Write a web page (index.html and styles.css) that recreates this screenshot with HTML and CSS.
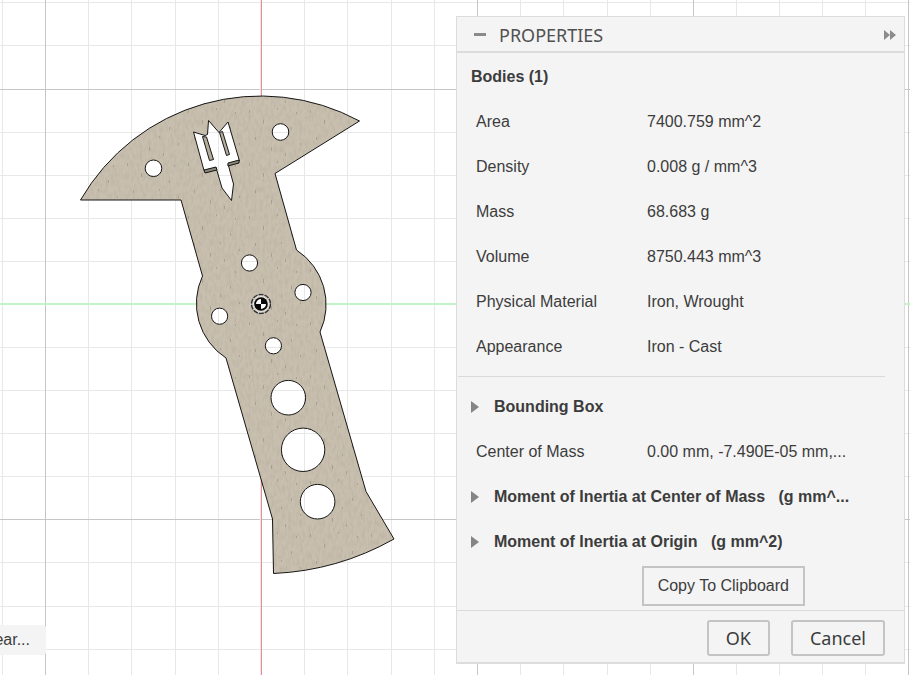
FILE: index.html
```
<!DOCTYPE html>
<html lang="en">
<head>
<meta charset="utf-8">
<title>Properties</title>
<link rel="stylesheet" href="styles.css">
</head>
<body>
<main class="workspace">
  <svg class="canvas" aria-hidden="true">
    <defs>
      <filter id="grain" x="0" y="0" width="1" height="1" color-interpolation-filters="sRGB">
        <feTurbulence type="fractalNoise" baseFrequency="0.35 0.15" numOctaves="2" seed="4"/>
        <feColorMatrix values="0 0 0 0 0.5  0 0 0 0 0.47  0 0 0 0 0.41  0.3 0 0 0 -0.12"/>
        <feComposite in2="SourceGraphic" operator="in" result="noise"/>
        <feMerge><feMergeNode in="SourceGraphic"/><feMergeNode in="noise"/></feMerge>
      </filter>
      <pattern id="specks" width="61" height="53" patternUnits="userSpaceOnUse">
        <path d="M5.500 4v3M19.500 14v4M33.500 2v2M47.500 21v3M11.500 31v3M27.500 41v4M56.500 37v2M41.500 47v3M52.500 6v2M37.500 30v2" stroke="#857d6e" opacity=".45"/>
      </pattern>
      <path id="outline" d="M80.500 200A208 208 0 0 1 359.500 121L275 173.500L296.500 250A65 65 0 0 1 320 332L366 491.500L394 539A270 270 0 0 1 273.500 573.500L272.500 519L226 358A65 65 0 0 1 202.500 276L181 200Z
        M145.200 168.300a8.300 8.300 0 1 0 16.600 0a8.300 8.300 0 1 0 -16.600 0Z
        M272.200 132a8.300 8.300 0 1 0 16.600 0a8.300 8.300 0 1 0 -16.600 0Z
        M241.400 263a8.100 8.100 0 1 0 16.200 0a8.100 8.100 0 1 0 -16.200 0Z
        M294.900 292.500a8.100 8.100 0 1 0 16.200 0a8.100 8.100 0 1 0 -16.200 0Z
        M211.500 316.200a8.100 8.100 0 1 0 16.200 0a8.100 8.100 0 1 0 -16.200 0Z
        M265.300 345.800a8.100 8.100 0 1 0 16.200 0a8.100 8.100 0 1 0 -16.200 0Z
        M271 397.700a17.300 17.300 0 1 0 34.600 0a17.300 17.300 0 1 0 -34.600 0Z
        M281.400 449.800a21.700 21.700 0 1 0 43.400 0a21.700 21.700 0 1 0 -43.400 0Z
        M300.300 501.700a17.300 17.300 0 1 0 34.600 0a17.300 17.300 0 1 0 -34.600 0Z
        M193.500 132L205 135.500L207.500 134.500L208.500 120.500L219 132.500L228 122L239.500 161L228 164L233.500 184L231.500 200.500L222 188L216 167.500L204 170.500Z"/>
    </defs>

    <g class="grid-minor">
      <path d="M2.500 0V2000M88.500 0V2000M131.500 0V2000M175.500 0V2000M218.500 0V2000M304.500 0V2000M347.500 0V2000M391.500 0V2000M434.500 0V2000M520.500 0V2000M563.500 0V2000M607.500 0V2000M650.500 0V2000M736.500 0V2000M779.500 0V2000M822.500 0V2000M865.500 0V2000"/>
      <path d="M0 2.500H3000M0 45.500H3000M0 132.500H3000M0 175.500H3000M0 218.500H3000M0 261.500H3000M0 347.500H3000M0 390.500H3000M0 433.500H3000M0 476.500H3000M0 562.500H3000M0 606.500H3000M0 649.500H3000"/>
    </g>
    <path class="grid-major" d="M45.500 0V2000M477.500 0V2000M693.500 0V2000M908.500 0V2000M0 89.500H3000M0 519.500H3000"/>
    <rect class="axis-x" y="303" width="3000" height="2"/>
    <rect class="axis-y-halo" x="260" width="2" height="2000"/>
    <rect class="axis-y" x="261" width="1" height="2000"/>

    <g fill-rule="evenodd">
      <use href="#outline" fill="#c8bfaf" filter="url(#grain)"/>
      <use href="#outline" fill="url(#specks)"/>
      <use href="#outline" class="edge"/>
    </g>

    <g class="trident">
      <path fill="#8b8474" d="M204 170l12-3l1 3l-12 3zM228 163l11-3v3l-11 3z"/>
      <path fill="#b5ac9b" d="M202.500 136.500L206.500 137L213.500 159.500L209.500 160.500ZM219.500 132.500L222.500 131.500L229.500 154.500L226.500 155.500Z"/>
    </g>

    <g>
      <circle cx="261" cy="304" r="10" fill="#dddad4"/>
      <path d="M250 304h22M261 293v22" stroke="#eee" stroke-width="1"/>
      <circle cx="261" cy="304" r="9.500" fill="none" stroke="#333" stroke-width="1.500" stroke-dasharray="5 1"/>
      <circle cx="261" cy="304" r="6.800" fill="#080808"/>
      <path d="M261 304v-5a5 5 0 0 0 -5 5zM261 304v5a5 5 0 0 0 5 -5z" fill="#fff"/>
    </g>
  </svg>

  <div class="hint">ear...</div>

  <section class="panel" aria-labelledby="panel-title">
    <header class="panel-header">
      <button class="icon-button" type="button" aria-label="Collapse">
        <svg width="12" height="4"><path d="M0 0h12v3H0z" fill="#8b8b8b"/></svg>
      </button>
      <h1 id="panel-title">PROPERTIES</h1>
      <button class="icon-button" type="button" aria-label="Dock">
        <svg width="12" height="10"><path d="M0 0l6 5l-6 5zM6 0l6 5l-6 5z" fill="#8b8b8b"/></svg>
      </button>
    </header>
    <div class="panel-body">
      <h2 class="group">Bodies (1)</h2>
      <dl class="properties">
        <dt>Area</dt><dd>7400.759 mm^2</dd>
        <dt>Density</dt><dd>0.008 g / mm^3</dd>
        <dt>Mass</dt><dd>68.683 g</dd>
        <dt>Volume</dt><dd>8750.443 mm^3</dd>
        <dt>Physical Material</dt><dd>Iron, Wrought</dd>
        <dt>Appearance</dt><dd>Iron - Cast</dd>
      </dl>
      <hr>
      <button class="expander" type="button"><svg width="8" height="12"><path d="M0 0l8 6l-8 6z" fill="#858585"/></svg>Bounding Box</button>
      <dl class="properties">
        <dt>Center of Mass</dt><dd>0.00 mm, -7.490E-05 mm,...</dd>
      </dl>
      <button class="expander" type="button"><svg width="8" height="12"><path d="M0 0l8 6l-8 6z" fill="#858585"/></svg>Moment of Inertia at Center of Mass &nbsp; (g mm^...</button>
      <button class="expander" type="button"><svg width="8" height="12"><path d="M0 0l8 6l-8 6z" fill="#858585"/></svg>Moment of Inertia at Origin &nbsp; (g mm^2)</button>
      <div class="copy-row"><button class="copy" type="button">Copy To Clipboard</button></div>
    </div>
    <footer class="panel-footer">
      <button class="action" type="button">OK</button>
      <button class="action" type="button">Cancel</button>
    </footer>
  </section>
</main>
</body>
</html>
```
FILE: styles.css
```
* { box-sizing: border-box; }

body {
  margin: 0;
  background: #fff;
  color: #3c3c3c;
  font: 16px/20px "Liberation Sans", Arial, sans-serif;
}

button {
  margin: 0;
  padding: 0;
  border: 0;
  background: none;
  color: inherit;
  font: inherit;
}

button svg { display: block; flex: none; }

.workspace {
  position: relative;
  display: flex;
  justify-content: flex-end;
  align-items: flex-start;
  min-height: 100vh;
  padding: 16px 5px 10px;
  overflow: hidden;
}

.canvas {
  position: absolute;
  inset: 0;
  width: 100%;
  height: 100%;
}

.grid-minor { stroke: #e8e8e8; }
.grid-major { stroke: #c6c6c6; }
.axis-x { fill: #c2f4c8; }
.axis-y-halo { fill: #fae3e5; }
.axis-y { fill: #dc8f95; }
.edge { fill: none; stroke: #161616; stroke-width: 1; }
.trident { stroke: #161616; stroke-width: 1; }

.hint {
  position: absolute;
  left: 0;
  bottom: 20px;
  display: flex;
  justify-content: flex-end;
  width: 46px;
  padding: 5px 16px 5px 0;
  overflow: hidden;
  border-radius: 0 3px 3px 0;
  background: #f4f4f4;
}

.panel {
  position: relative;
  width: min(449px, 100%);
  border: 1px solid #dcdcdc;
  border-bottom-width: 2px;
  background: #f4f4f4;
}

.panel-header {
  display: flex;
  align-items: center;
  height: 36px;
  padding: 2px 8px 0 17px;
  border-bottom: 2px solid #dcdcdc;
}

.panel-header h1 {
  flex: 1;
  margin: 0 0 0 13px;
  color: #505050;
  font: 400 18px/24px "Noto Sans", sans-serif;
}

.panel-body { padding: 1px 0 4px; }

.group {
  margin: 0 14px;
  font-size: 16px;
  line-height: 45px;
}

.properties {
  display: grid;
  grid-template-columns: 171px 1fr;
  margin: 0 19px;
  line-height: 45px;
}

.properties dt, .properties dd { margin: 0; white-space: nowrap; }

hr {
  height: 1px;
  margin: 7px 19px 7px 1px;
  border: 0;
  background: #dadada;
}

.expander {
  display: flex;
  align-items: center;
  gap: 15px;
  width: 100%;
  padding-left: 14px;
  font-weight: bold;
  line-height: 45px;
  text-align: left;
  white-space: nowrap;
}

.copy-row {
  display: flex;
  justify-content: flex-end;
  padding: 2px 99px 0 0;
}

.copy {
  padding: 8px 14px;
  border: 2px solid #c4c4c4;
}

.panel-footer {
  display: flex;
  justify-content: flex-end;
  gap: 21px;
  padding: 9px 19px 6px;
  border-top: 1px solid #dcdcdc;
}

.action {
  padding: 4px 17px;
  border: 2px solid #c4c4c4;
  border-radius: 3px;
  font: 18px/24px "Noto Sans", sans-serif;
}
```
